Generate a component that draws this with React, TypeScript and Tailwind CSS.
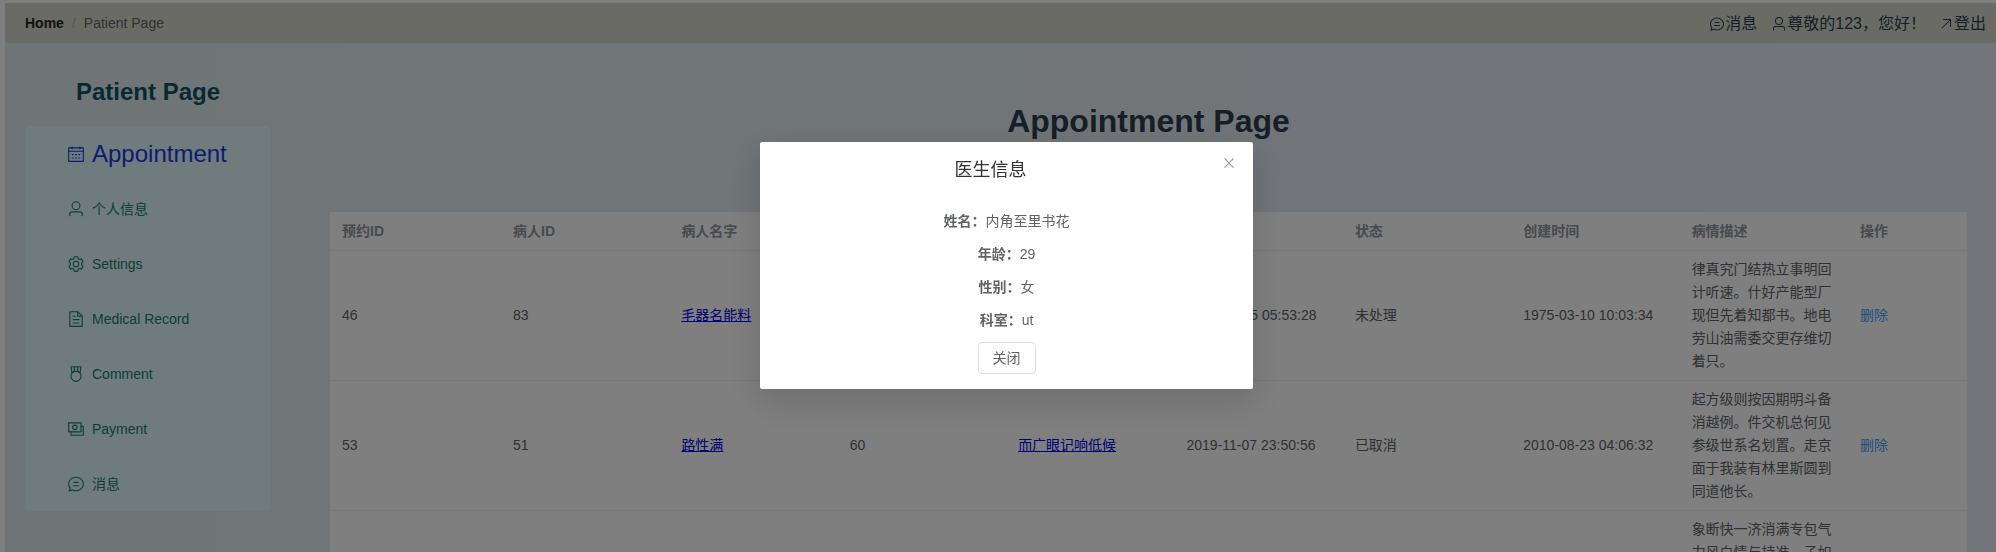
import React, { useState } from "react";

type IconProps = { className?: string };

function Icon({ className = "", children }: IconProps & { children: React.ReactNode }) {
  return (
    <svg viewBox="0 0 1024 1024" fill="currentColor" aria-hidden="true" className={"shrink-0 " + className}>
      {children}
    </svg>
  );
}

const Calendar = (p: IconProps) => (
  <Icon {...p}>
    <path d="M128 384v512h768V192H768v32a32 32 0 1 1-64 0v-32H320v32a32 32 0 0 1-64 0v-32H128v128h768v64zm192-256h384V96a32 32 0 1 1 64 0v32h160a32 32 0 0 1 32 32v768a32 32 0 0 1-32 32H96a32 32 0 0 1-32-32V160a32 32 0 0 1 32-32h160V96a32 32 0 0 1 64 0zm-32 384h64a32 32 0 0 1 0 64h-64a32 32 0 0 1 0-64m0 192h64a32 32 0 1 1 0 64h-64a32 32 0 1 1 0-64m192-192h64a32 32 0 0 1 0 64h-64a32 32 0 0 1 0-64m0 192h64a32 32 0 1 1 0 64h-64a32 32 0 1 1 0-64m192-192h64a32 32 0 1 1 0 64h-64a32 32 0 1 1 0-64m0 192h64a32 32 0 1 1 0 64h-64a32 32 0 1 1 0-64" />
  </Icon>
);

const User = (p: IconProps) => (
  <Icon {...p}>
    <path d="M512 512a192 192 0 1 0 0-384 192 192 0 0 0 0 384m0 64a256 256 0 1 1 0-512 256 256 0 0 1 0 512m320 320v-96a96 96 0 0 0-96-96H288a96 96 0 0 0-96 96v96a32 32 0 1 1-64 0v-96a160 160 0 0 1 160-160h448a160 160 0 0 1 160 160v96a32 32 0 1 1-64 0" />
  </Icon>
);

const Setting = (p: IconProps) => (
  <Icon {...p}>
    <path d="M600.704 64a32 32 0 0 1 30.464 22.208l35.2 109.376c14.784 7.232 28.928 15.36 42.432 24.512l112.384-24.192a32 32 0 0 1 34.432 15.36L944.32 364.8a32 32 0 0 1-4.032 37.504l-77.12 85.12a357.12 357.12 0 0 1 0 49.024l77.12 85.248a32 32 0 0 1 4.032 37.504l-88.704 153.6a32 32 0 0 1-34.432 15.296L708.8 803.904c-13.44 9.088-27.648 17.28-42.368 24.512l-35.264 109.376A32 32 0 0 1 600.704 960H423.296a32 32 0 0 1-30.464-22.208L357.696 828.48a351.616 351.616 0 0 1-42.56-24.64l-112.32 24.256a32 32 0 0 1-34.432-15.36L79.68 659.2a32 32 0 0 1 4.032-37.504l77.12-85.248a357.12 357.12 0 0 1 0-48.896l-77.12-85.248A32 32 0 0 1 79.68 364.8l88.704-153.6a32 32 0 0 1 34.432-15.296l112.32 24.256c13.568-9.152 27.776-17.408 42.56-24.64l35.2-109.312A32 32 0 0 1 423.232 64H600.64zm-23.424 64H446.72l-36.352 113.088-24.512 11.968a294.113 294.113 0 0 0-34.816 20.096l-22.656 15.36-116.224-25.088-65.28 113.152 79.68 88.192-1.92 27.136a293.12 293.12 0 0 0 0 40.192l1.92 27.136-79.808 88.192 65.344 113.152 116.224-25.024 22.656 15.296a294.113 294.113 0 0 0 34.816 20.096l24.512 11.968L446.72 896h130.688l36.48-113.152 24.448-11.904a288.282 288.282 0 0 0 34.752-20.096l22.592-15.296 116.288 25.024 65.28-113.152-79.744-88.192 1.92-27.136a293.12 293.12 0 0 0 0-40.256l-1.92-27.136 79.808-88.128-65.344-113.152-116.288 24.96-22.592-15.232a287.616 287.616 0 0 0-34.752-20.096l-24.448-11.904L577.344 128zM512 320a192 192 0 1 1 0 384 192 192 0 0 1 0-384m0 64a128 128 0 1 0 0 256 128 128 0 0 0 0-256" />
  </Icon>
);

const Document = (p: IconProps) => (
  <Icon {...p}>
    <path d="M832 384H576V128H192v768h640zm-26.496-64L640 154.496V320zM160 64h480l256 256v608a32 32 0 0 1-32 32H160a32 32 0 0 1-32-32V96a32 32 0 0 1 32-32m160 448h384v64H320zm0-192h160v64H320zm0 384h384v64H320z" />
  </Icon>
);

const Medal = (p: IconProps) => (
  <Icon {...p}>
    <path d="M512 896a256 256 0 1 0 0-512 256 256 0 0 0 0 512m0 64a320 320 0 1 1 0-640 320 320 0 0 1 0 640" />
    <path d="M576 128H448v200a286.72 286.72 0 0 1 64-8c19.52 0 40.832 2.688 64 8zm64 0v219.648c24.448 9.088 50.56 20.416 78.4 33.92L757.44 128zm-256 0H266.624l39.04 253.568c27.84-13.504 53.888-24.832 78.336-33.92zM229.312 64h565.376a32 32 0 0 1 31.616 36.864L768 480c-113.792-64-199.104-96-256-96s-142.208 32-256 96l-58.304-379.136A32 32 0 0 1 229.312 64" />
  </Icon>
);

const Money = (p: IconProps) => (
  <Icon {...p}>
    <path d="M256 640v192h640V384H768v-64h150.976c14.272 0 19.456 1.472 24.64 4.288a29.056 29.056 0 0 1 12.16 12.096c2.752 5.184 4.224 10.368 4.224 24.64v493.952c0 14.272-1.472 19.456-4.288 24.64a29.056 29.056 0 0 1-12.096 12.16c-5.184 2.752-10.368 4.224-24.64 4.224H233.024c-14.272 0-19.456-1.472-24.64-4.288a29.056 29.056 0 0 1-12.16-12.096c-2.688-5.184-4.224-10.368-4.224-24.576V640z" />
    <path d="M768 192H128v448h640zm64-22.976v493.952c0 14.272-1.472 19.456-4.288 24.64a29.056 29.056 0 0 1-12.096 12.16c-5.184 2.752-10.368 4.224-24.64 4.224H105.024c-14.272 0-19.456-1.472-24.64-4.288a29.056 29.056 0 0 1-12.16-12.096C65.536 682.432 64 677.248 64 663.04V168.96c0-14.272 1.472-19.456 4.288-24.64a29.056 29.056 0 0 1 12.096-12.16C85.568 129.536 90.752 128 104.96 128h685.952c14.272 0 19.456 1.472 24.64 4.288a29.056 29.056 0 0 1 12.16 12.096c2.752 5.184 4.224 10.368 4.224 24.64z" />
    <path d="M448 576a160 160 0 1 1 0-320 160 160 0 0 1 0 320m0-64a96 96 0 1 0 0-192 96 96 0 0 0 0 192" />
  </Icon>
);

const ChatLineRound = (p: IconProps) => (
  <Icon {...p}>
    <path d="m174.72 855.68 135.296-45.12 23.68 11.84C388.096 849.536 448.576 864 512 864c211.84 0 384-166.784 384-352S723.84 160 512 160 128 326.784 128 512c0 69.12 24.96 139.264 70.848 199.232l22.08 28.8-46.272 115.584zm-45.248 82.56A32 32 0 0 1 89.6 896l58.368-145.92C94.72 680.32 64 596.864 64 512 64 299.904 256 96 512 96s448 203.904 448 416-192 416-448 416a461.056 461.056 0 0 1-206.912-48.384l-175.616 58.56z" />
    <path d="M352 576h320q32 0 32 32t-32 32H352q-32 0-32-32t32-32m32-192h256q32 0 32 32t-32 32H384q-32 0-32-32t32-32" />
  </Icon>
);

const TopRight = (p: IconProps) => (
  <Icon {...p}>
    <path d="M768 256H353.6a32 32 0 1 1 0-64H800a32 32 0 0 1 32 32v448a32 32 0 0 1-64 0z" />
    <path d="M777.344 201.344a32 32 0 0 1 45.312 45.312l-544 544a32 32 0 0 1-45.312-45.312l544-544z" />
  </Icon>
);

const Close = (p: IconProps) => (
  <Icon {...p}>
    <path d="M764.288 214.592 512 466.88 259.712 214.592a31.936 31.936 0 0 0-45.12 45.12L466.752 512 214.528 764.224a31.936 31.936 0 1 0 45.12 45.184L512 557.184l252.288 252.288a31.936 31.936 0 0 0 45.12-45.12L557.12 512.064l252.288-252.352a31.936 31.936 0 1 0-45.12-45.184z" />
  </Icon>
);

const menu = [
  { label: "Appointment", icon: Calendar, active: true },
  { label: "个人信息", icon: User },
  { label: "Settings", icon: Setting },
  { label: "Medical Record", icon: Document },
  { label: "Comment", icon: Medal },
  { label: "Payment", icon: Money },
  { label: "消息", icon: ChatLineRound },
];

const columns = ["预约ID", "病人ID", "病人名字", "医生ID", "医生名字", "预约时间", "状态", "创建时间", "病情描述", "操作"];

type Row = {
  id?: string;
  patientId?: string;
  patient?: string;
  doctorId?: string;
  doctor?: string;
  time?: string;
  status?: string;
  created?: string;
  description: string;
};

const rows: Row[] = [
  {
    id: "46",
    patientId: "83",
    patient: "毛器名能料",
    doctor: "内角至里书花",
    time: "2003-08-15 05:53:28",
    status: "未处理",
    created: "1975-03-10 10:03:34",
    description: "律真究门结热立事明回计听速。什好产能型厂现但先着知都书。地电劳山油需委交更存维切着只。",
  },
  {
    id: "53",
    patientId: "51",
    patient: "路性满",
    doctorId: "60",
    doctor: "而广眼记响低候",
    time: "2019-11-07 23:50:56",
    status: "已取消",
    created: "2010-08-23 04:06:32",
    description: "起方级则按因期明斗备消越例。件交机总何见参级世系名划置。走京面于我装有林里斯圆到同道他长。",
  },
  {
    description: "象断快一济消满专包气力风白情与持准。子如",
  },
];

const fields = [
  ["姓名：", "内角至里书花"],
  ["年龄：", "29"],
  ["性别：", "女"],
  ["科室：", "ut"],
];

function Header() {
  return (
    <header className="flex h-10 items-center justify-between bg-[#d6d7cb] pr-2.5 pl-5">
      <nav aria-label="Breadcrumb" className="flex text-sm leading-none">
        <a href="#home" className="font-bold text-[#222326]">Home</a>
        <span className="mx-2 text-[#a8abb2]">/</span>
        <span className="text-[#606266]">Patient Page</span>
      </nav>
      <div className="flex items-center pt-0.5 text-base text-[#2c3e50]">
        <a href="#messages" className="mr-3.5 flex items-center"><ChatLineRound className="size-4" />消息</a>
        <a href="#me" className="mr-3 flex items-center"><User className="size-4" />尊敬的123，您好！</a>
        <a href="#logout" className="flex items-center"><TopRight className="size-4" />登出</a>
      </div>
    </header>
  );
}

function Sidebar() {
  return (
    <aside className="w-[246px] shrink-0">
      <h2 className="mt-[34px] mb-[19px] text-center text-2xl leading-[30px] font-bold text-[#0d5560]">Patient Page</h2>
      <ul className="rounded-[5px] bg-[#e0f7fa]">
        {menu.map(({ label, icon: Glyph, active }) => (
          <li key={label}>
            <a
              href={"#" + label}
              className={
                "flex h-[55px] items-center pl-[42px] " +
                (active ? "text-2xl text-[#1c39e0]" : "text-sm text-[#14806c]")
              }
            >
              <Glyph className="mr-[7px] size-[18px]" />
              {label}
            </a>
          </li>
        ))}
      </ul>
    </aside>
  );
}

function AppointmentTable() {
  return (
    <table className="w-full table-fixed bg-white text-left text-sm leading-[23px] text-[#606266]">
      <colgroup>
        <col className="w-[171px]" />
        {columns.slice(1, -1).map((c) => (
          <col key={c} />
        ))}
        <col className="w-[119px]" />
      </colgroup>
      <thead>
        <tr className="border-b border-[#ebeef5] text-[#909399]">
          {columns.map((c) => (
            <th key={c} scope="col" className="px-3 pt-2 pb-[7px] font-bold">{c}</th>
          ))}
        </tr>
      </thead>
      <tbody>
        {rows.map((r) => (
          <tr key={r.description} className="border-b border-[#ebeef5]">
            <td className="px-3">{r.id}</td>
            <td className="px-3">{r.patientId}</td>
            <td className="px-3">
              {r.patient && <a href="#patient" className="text-[#0000ee] underline">{r.patient}</a>}
            </td>
            <td className="px-3">{r.doctorId}</td>
            <td className="px-3">
              {r.doctor && <a href="#doctor" className="text-[#0000ee] underline">{r.doctor}</a>}
            </td>
            <td className="px-3">{r.time}</td>
            <td className="px-3">{r.status}</td>
            <td className="px-3">{r.created}</td>
            <td className="px-3 py-[7px]">{r.description}</td>
            <td className="px-3">{r.id && <button type="button" className="text-[#409eff]">删除</button>}</td>
          </tr>
        ))}
      </tbody>
    </table>
  );
}

function DoctorDialog({ onClose }: { onClose: () => void }) {
  return (
    <div className="fixed inset-0 overflow-hidden bg-black/50 pl-[17px]">
      <div
        role="dialog"
        aria-modal="true"
        aria-labelledby="doctor-title"
        className="relative mx-auto mt-[142px] flex w-[493px] flex-col items-center rounded-[2px] bg-white pb-[15px] text-sm text-[#606266] shadow-[0_12px_32px_4px_rgba(0,0,0,0.12)]"
      >
        <button
          type="button"
          aria-label="Close"
          onClick={onClose}
          className="absolute top-0 right-0 flex h-[42px] w-12 items-center justify-center text-[#909399]"
        >
          <Close className="size-4" />
        </button>
        <h3 id="doctor-title" className="w-full pt-4 pr-8 text-center text-lg leading-6 text-[#303133]">医生信息</h3>
        <dl className="mt-[22px]">
          {fields.map(([k, v]) => (
            <div key={k} className="flex h-[33px] items-center justify-center">
              <dt className="font-bold">{k}</dt>
              <dd>{v}</dd>
            </div>
          ))}
        </dl>
        <button type="button" onClick={onClose} className="mt-1.5 h-8 rounded border border-[#dcdfe6] px-[14px]">
          关闭
        </button>
      </div>
    </div>
  );
}

export default function App() {
  const [open, setOpen] = useState(true);
  return (
    <div className="h-screen overflow-hidden bg-white pt-[3px] pl-[5px] font-['Liberation_Sans','Noto_Sans_CJK_SC',sans-serif]">
      <div className="min-h-full bg-linear-to-r from-[#dfebef] to-[#e4eaf3]">
        <Header />
        <div className="flex pl-5">
          <Sidebar />
          <main className="min-w-0 flex-1 pr-[29px] pl-[59px]">
            <h1 className="mt-[58px] mb-[71px] text-center text-[32px] leading-10 font-bold text-[#2c3e50]">Appointment Page</h1>
            <AppointmentTable />
          </main>
        </div>
      </div>
      {open && <DoctorDialog onClose={() => setOpen(false)} />}
    </div>
  );
}
